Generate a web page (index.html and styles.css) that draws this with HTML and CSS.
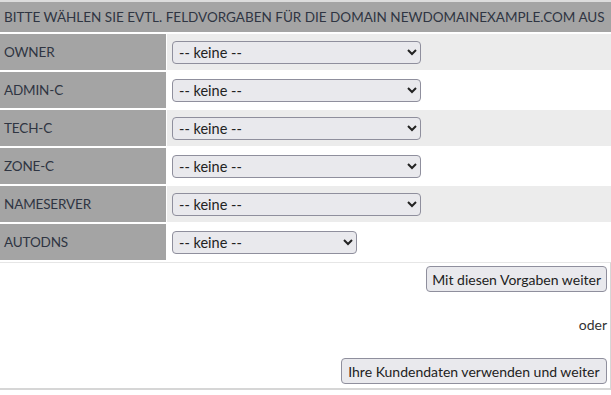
FILE: index.html
```html
<!DOCTYPE html>
<html lang="de">
<head>
    <meta charset="UTF-8">
    <title>Domain Vorgaben</title>
    <link rel="stylesheet" href="styles.css">
</head>
<body>
<div id="form">
    <div class="head">BITTE WÄHLEN SIE EVTL. FELDVORGABEN FÜR DIE DOMAIN NEWDOMAINEXAMPLE.COM AUS</div>

    <div class="row odd">
        <div class="label">OWNER</div>
        <div class="value"><select class="pick"><option>-- keine --</option></select></div>
    </div>
    <div class="row">
        <div class="label">ADMIN-C</div>
        <div class="value"><select class="pick"><option>-- keine --</option></select></div>
    </div>
    <div class="row odd">
        <div class="label">TECH-C</div>
        <div class="value"><select class="pick"><option>-- keine --</option></select></div>
    </div>
    <div class="row">
        <div class="label">ZONE-C</div>
        <div class="value"><select class="pick"><option>-- keine --</option></select></div>
    </div>
    <div class="row odd">
        <div class="label">NAMESERVER</div>
        <div class="value"><select class="pick"><option>-- keine --</option></select></div>
    </div>
    <div class="row">
        <div class="label">AUTODNS</div>
        <div class="value"><select class="pick small"><option>-- keine --</option></select></div>
    </div>

    <div class="actions">
        <button class="btn">Mit diesen Vorgaben weiter</button>
        <p class="oder">oder</p>
        <button class="btn wide">Ihre Kundendaten verwenden und weiter</button>
    </div>
</div>
</body>
</html>
```

FILE: styles.css
```css
body {
    margin: 0;
    padding: 0;
    font-family: Lato, "Open Sans", sans-serif;
    font-size: 14px;
    color: #333;
    background: #fff;
}

#form {
    border-top: 2px solid #dcdcdc;
}

.head {
    height: 30px;
    line-height: 30px;
    padding-left: 4px;
    background: #a4a4a4;
    color: #2f3542;
    font-size: 13.5px;
    margin-bottom: 2px;
    white-space: nowrap;
}

.row {
    display: grid;
    grid-template-columns: 166px 1fr;
    column-gap: 1px;
    height: 36px;
    margin-bottom: 2px;
}

.label {
    background: #a4a4a4;
    color: #2f3542;
    font-size: 13.5px;
    letter-spacing: -0.15px;
    padding-left: 4px;
    display: flex;
    align-items: center;
}

.value {
    background: #fff;
    display: flex;
    align-items: center;
    padding-left: 5px;
}

.odd .value {
    background: #ececec;
}

.pick {
    width: 249px;
    height: 23px;
    font-family: Lato, "Open Sans", sans-serif;
    font-size: 14.5px;
    color: #222;
    background: #e9e9ed;
    border: 1px solid #8f8f9d;
    border-radius: 4px;
    padding: 0 2px;
}

.pick.small {
    width: 185px;
}

.actions {
    display: flex;
    flex-direction: column;
    align-items: flex-end;
    padding: 3px 3px 4px 0;
    border-top: 1px solid #e6e6e6;
    border-right: 1px solid #d6d6d6;
    border-bottom: 2px solid #d6d6d6;
}

.btn {
    font-family: Lato, "Open Sans", sans-serif;
    font-size: 14px;
    color: #222;
    background: #e9e9ed;
    border: 1px solid #8f8f9d;
    border-radius: 4px;
    height: 26px;
    padding: 0 5px;
}

.btn.wide {
    padding: 0 6.5px;
}

.oder {
    margin: 24px 0 0 0;
    height: 42px;
    color: #333;
}
```
